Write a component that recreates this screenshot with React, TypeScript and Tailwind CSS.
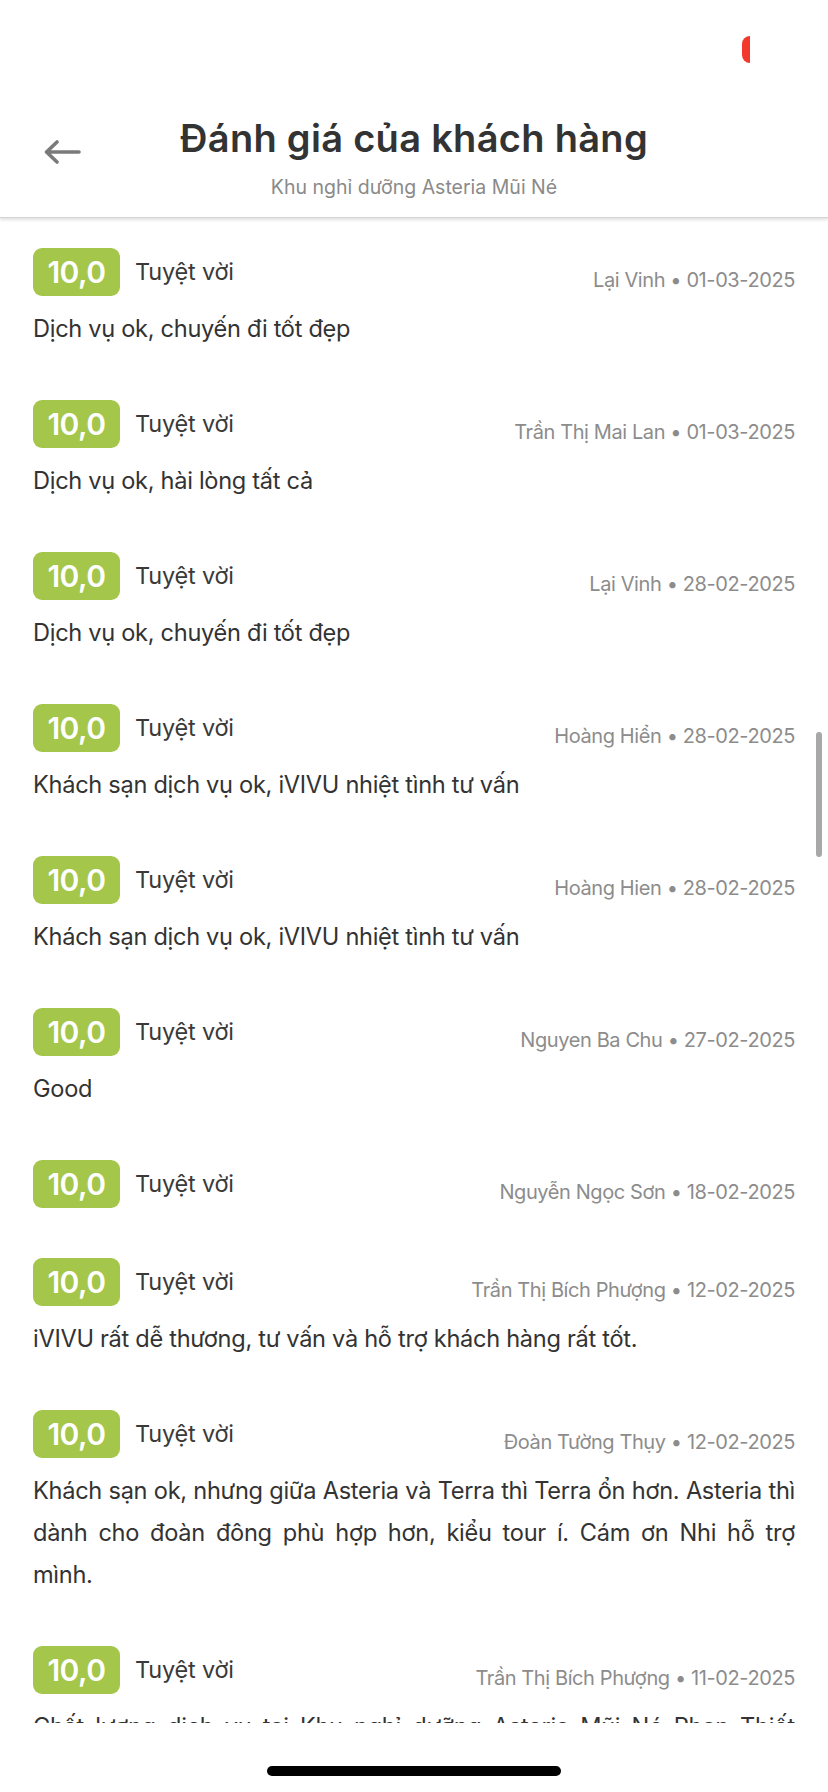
const reviews = [
  { name: "Lại Vinh", date: "01-03-2025", text: "Dịch vụ ok, chuyến đi tốt đẹp" },
  { name: "Trần Thị Mai Lan", date: "01-03-2025", text: "Dịch vụ ok, hài lòng tất cả" },
  { name: "Lại Vinh", date: "28-02-2025", text: "Dịch vụ ok, chuyến đi tốt đẹp" },
  { name: "Hoàng Hiển", date: "28-02-2025", text: "Khách sạn dịch vụ ok, iVIVU nhiệt tình tư vấn" },
  { name: "Hoàng Hien", date: "28-02-2025", text: "Khách sạn dịch vụ ok, iVIVU nhiệt tình tư vấn" },
  { name: "Nguyen Ba Chu", date: "27-02-2025", text: "Good" },
  { name: "Nguyễn Ngọc Sơn", date: "18-02-2025", text: "" },
  {
    name: "Trần Thị Bích Phượng",
    date: "12-02-2025",
    text: "iVIVU rất dễ thương, tư vấn và hỗ trợ khách hàng rất tốt.",
  },
  {
    name: "Đoàn Tường Thụy",
    date: "12-02-2025",
    text: "Khách sạn ok, nhưng giữa Asteria và Terra thì Terra ổn hơn. Asteria thì dành cho đoàn đông phù hợp hơn, kiểu tour í. Cám ơn Nhi hỗ trợ mình.",
  },
  {
    name: "Trần Thị Bích Phượng",
    date: "11-02-2025",
    text: "Chất lượng dịch vụ tại Khu nghỉ dưỡng Asteria Mũi Né Phan Thiết tương đối tốt, nhân viên thân thiện và nhiệt tình.",
  },
];

function BackArrow() {
  return (
    <svg width="38" height="24" viewBox="0 0 38 24" fill="none">
      <path
        d="M36 12H4M14 2L3.5 12L14 22"
        stroke="#7a7a7a"
        strokeWidth="3.6"
        strokeLinecap="round"
        strokeLinejoin="round"
      />
    </svg>
  );
}

function ReviewItem({ name, date, text }: { name: string; date: string; text: string }) {
  return (
    <div className="pb-[50px]">
      <div className="flex items-center">
        <div className="flex h-[48px] w-[87px] items-center justify-center rounded-[9px] bg-[#a4c64b] text-[30px] font-semibold tracking-[-0.5px] text-white">
          10,0
        </div>
        <span className="ml-[15px] text-[23.5px] tracking-[-0.2px] text-[#3a3a3a]">Tuyệt vời</span>
        <span className="ml-auto pt-[15px] text-[20px] tracking-[-0.4px] text-[#8c8c8c]">
          {name} • {date}
        </span>
      </div>
      {text && (
        <p className="mt-[12px] text-justify text-[23.6px] leading-[42px] tracking-[-0.3px] text-[#333]">
          {text}
        </p>
      )}
    </div>
  );
}

export default function App() {
  return (
    <div className="relative flex h-[1792px] w-[828px] flex-col overflow-hidden bg-white font-['Inter','Noto_Sans',sans-serif]">
      <header className="relative z-10 h-[218px] shrink-0 border-b border-[#d4d4d4] bg-white shadow-[0_2px_3px_rgba(0,0,0,0.12)]">
        <div className="flex justify-end pr-[78px] pt-[36px]">
          <div className="h-[27px] w-[8px] rounded-l-full bg-[#f2392c]" />
        </div>
        <div className="mt-[51px] grid grid-cols-[110px_1fr_110px] items-start">
          <div className="flex justify-start pl-[43px] pt-[26px]">
            <BackArrow />
          </div>
          <div className="flex flex-col items-center">
            <h1 className="text-[38px] font-semibold leading-[48px] tracking-[0.3px] text-[#333]">
              Đánh giá của khách hàng
            </h1>
            <p className="mt-[12px] text-[19.5px] leading-[26px] text-[#8a8a8a]">
              Khu nghỉ dưỡng Asteria Mũi Né
            </p>
          </div>
          <div />
        </div>
      </header>

      <main className="relative h-[1505px] shrink-0 overflow-hidden">
        <div className="px-[33px] pt-[30px]">
          {reviews.map((r, i) => (
            <ReviewItem key={i} {...r} />
          ))}
        </div>
        <div className="absolute right-[6px] top-[514px] h-[125px] w-[6px] rounded-full bg-[#a8a8a8]" />
      </main>

      <footer className="flex flex-1 justify-center pt-[43px]">
        <div className="h-[10px] w-[294px] rounded-full bg-black" />
      </footer>
    </div>
  );
}
